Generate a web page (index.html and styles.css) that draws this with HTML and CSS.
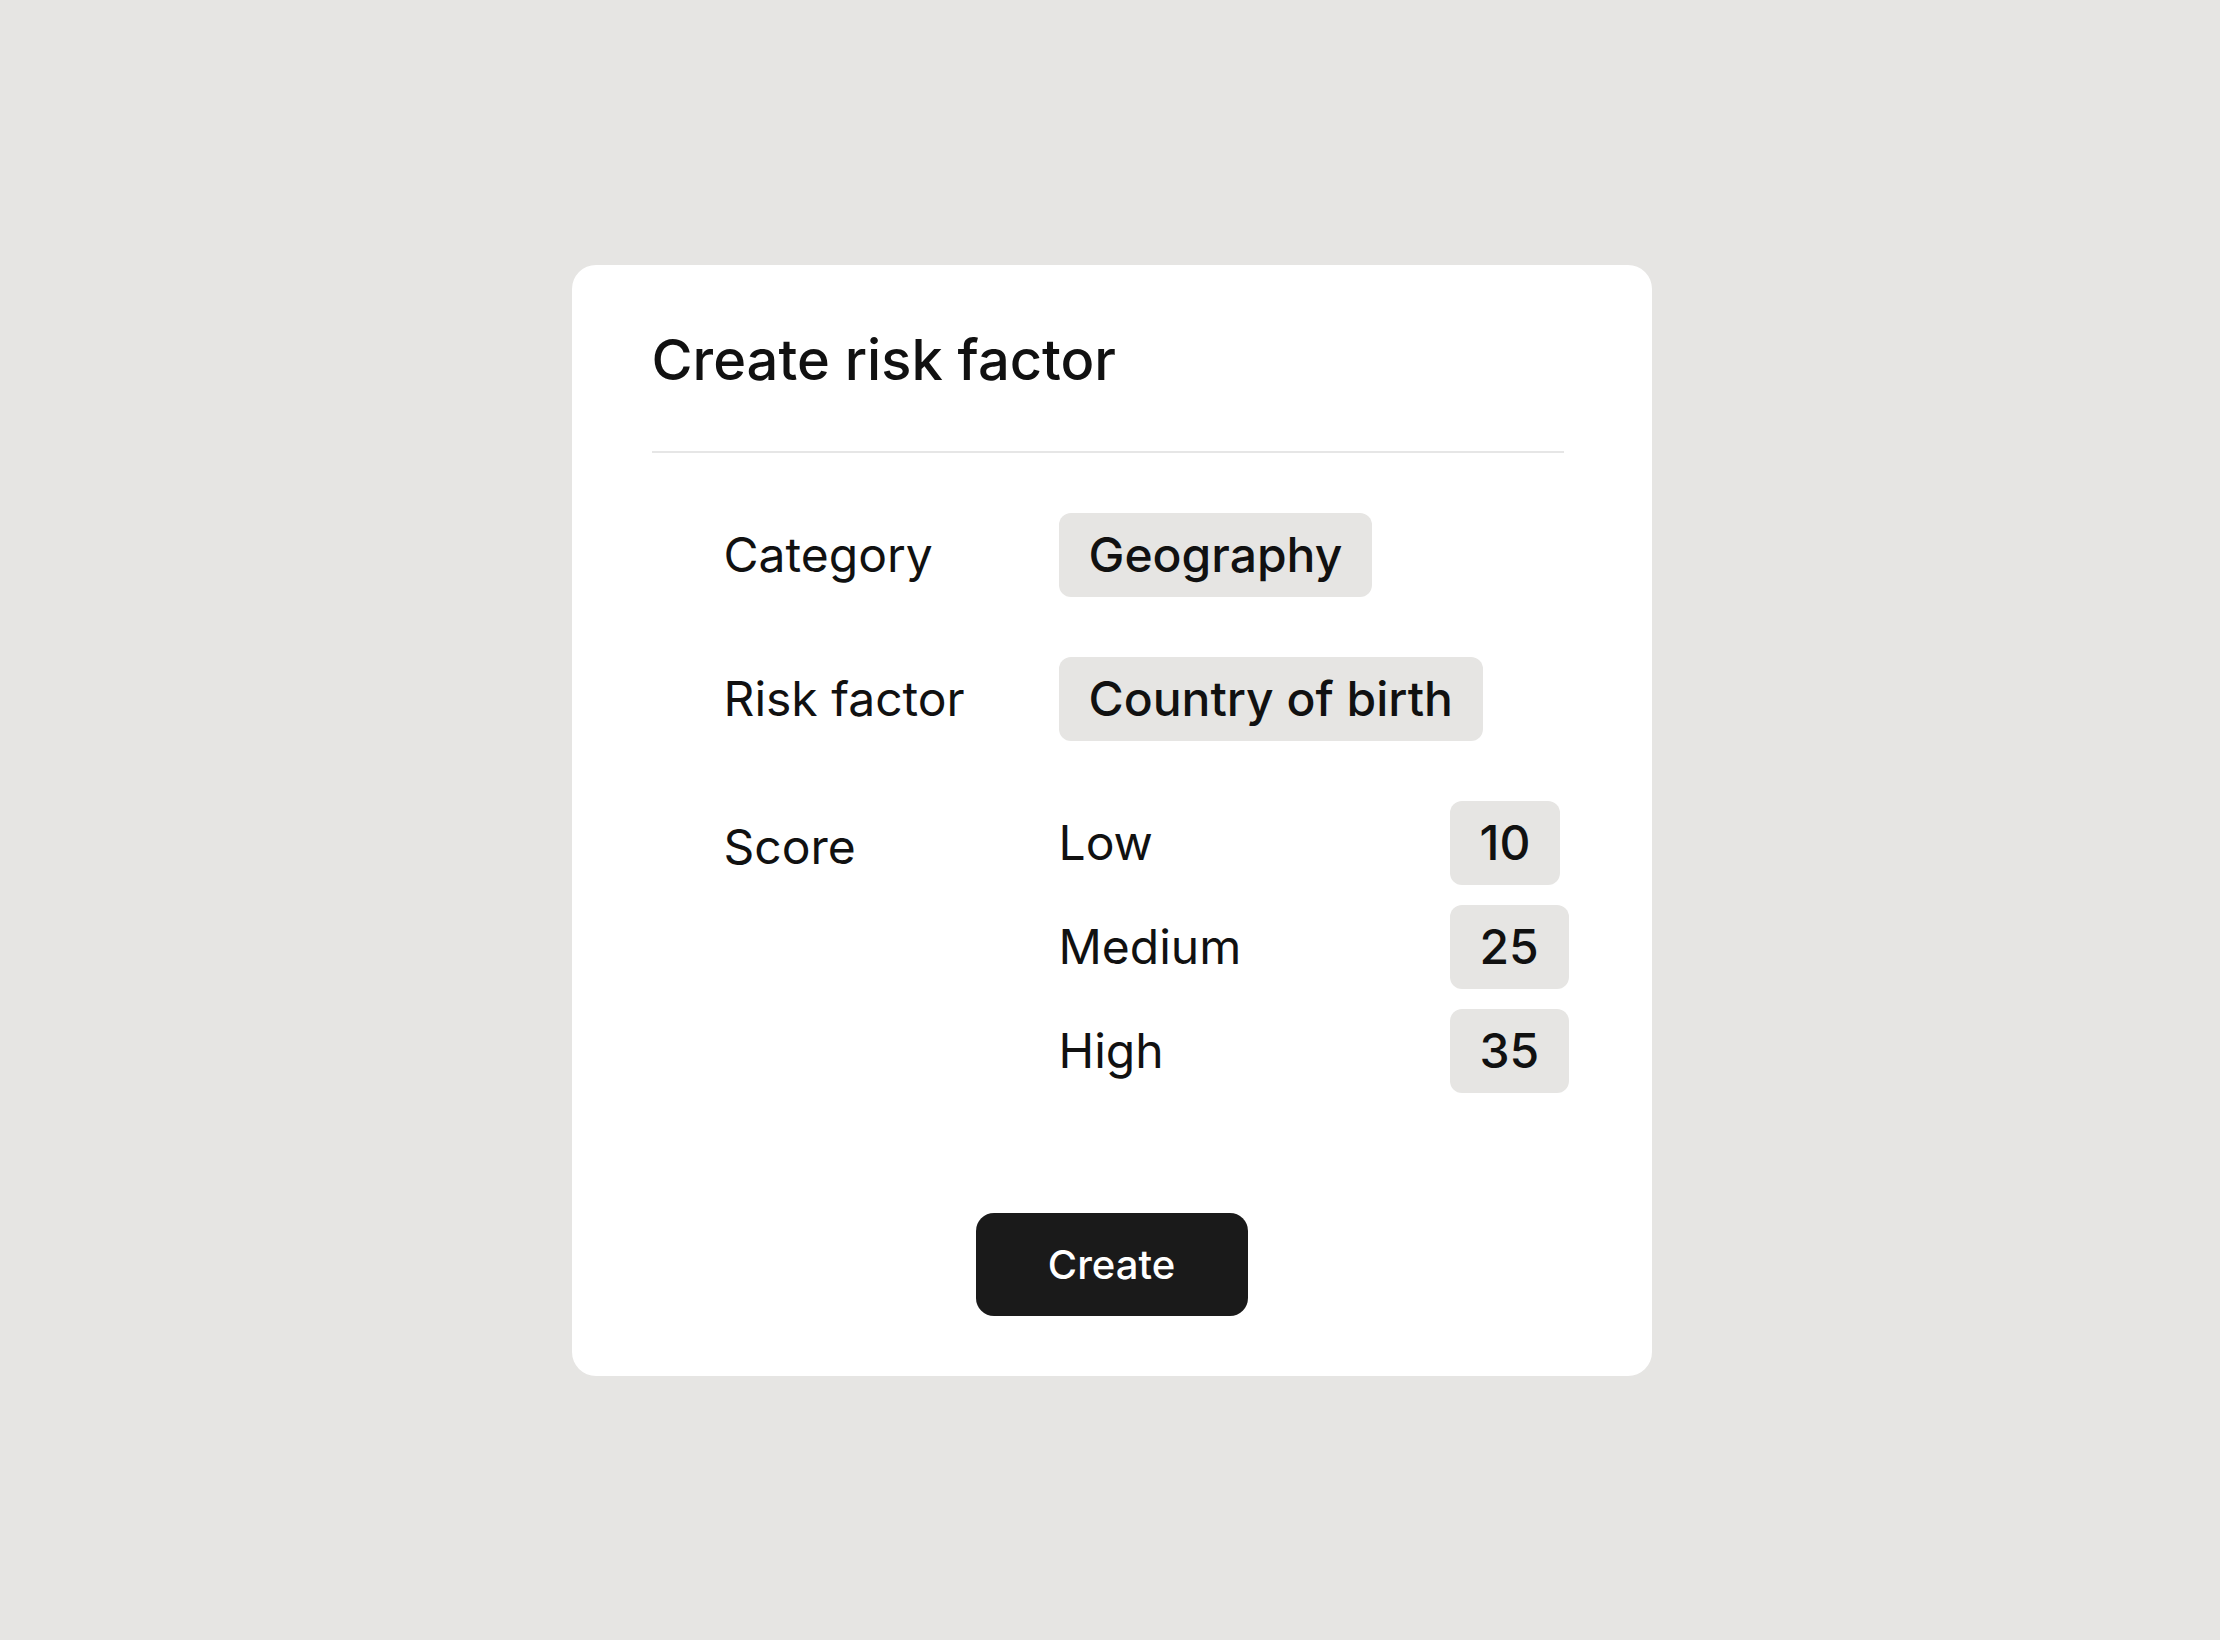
FILE: index.html
```html
<!DOCTYPE html>
<html lang="en">
<head>
    <meta charset="UTF-8">
    <meta name="viewport" content="width=device-width, initial-scale=1.0">
    <title>Create risk factor</title>
    <link rel="stylesheet" href="styles.css">
</head>
<body>

    <div class="card">
        <h1 class="card-title">Create risk factor</h1>
        <div class="divider"></div>

        <div class="form">
            <div class="label">Category</div>
            <div class="value"><span class="chip">Geography</span></div>

            <div class="label">Risk factor</div>
            <div class="value"><span class="chip">Country of birth</span></div>

            <div class="label score-label">Score</div>
            <div class="scores">
                <div class="score-name">Low</div>
                <div><span class="chip">10</span></div>

                <div class="score-name">Medium</div>
                <div><span class="chip">25</span></div>

                <div class="score-name">High</div>
                <div><span class="chip">35</span></div>
            </div>
        </div>

        <div class="actions">
            <button class="button">Create</button>
        </div>
    </div>

</body>
</html>
```

FILE: styles.css
```css
* {
    margin: 0;
    padding: 0;
    box-sizing: border-box;
}
body {
    font-family: 'Inter', 'Noto Sans', sans-serif;
    display: flex;
    justify-content: center;
    align-items: center;
    min-height: 100vh;
    padding-left: 3px;
    background-color: #e6e5e3;
    color: #111;
}
.card {
    width: 1080px;
    background-color: #fff;
    border-radius: 24px;
    padding: 63px 88px 60px 80px;
}
.card-title {
    font-size: 56px;
    font-weight: 500;
    line-height: 64px;
}
.divider {
    height: 2px;
    background-color: #e6e6e6;
    margin-top: 59px;
}
.form {
    display: grid;
    grid-template-columns: 335px auto;
    row-gap: 60px;
    align-items: center;
    padding: 60px 0 0 72px;
}
.label {
    font-size: 48px;
    line-height: 60px;
}
.score-label {
    align-self: start;
    padding-top: 16px;
}
.chip {
    display: inline-block;
    background-color: #e6e5e3;
    border-radius: 12px;
    font-size: 48px;
    font-weight: 500;
    line-height: 60px;
    padding: 12px 30px;
}
.scores {
    display: grid;
    grid-template-columns: 391px auto;
    row-gap: 20px;
    align-items: center;
}
.score-name {
    font-size: 48px;
    line-height: 60px;
}
.actions {
    display: flex;
    justify-content: center;
    padding-top: 120px;
    padding-left: 8px;
}
.button {
    width: 272px;
    height: 103px;
    background-color: #1a1a1a;
    color: #fff;
    font-family: inherit;
    font-size: 40px;
    font-weight: 500;
    border: none;
    border-radius: 18px;
    cursor: pointer;
}
```
